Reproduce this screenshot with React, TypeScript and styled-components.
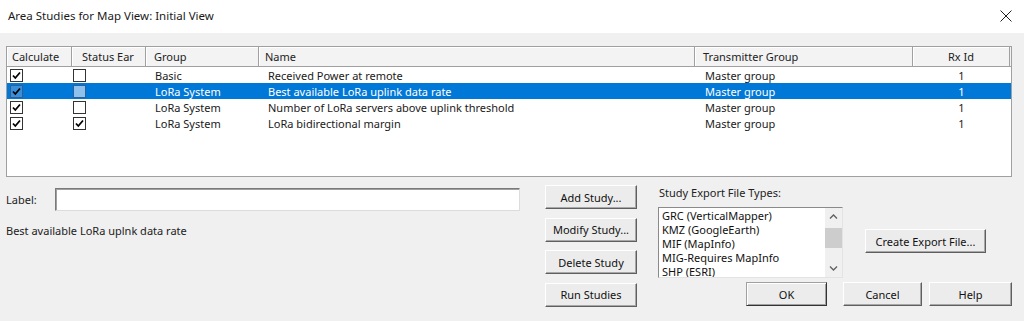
import React from 'react';
import styled, { createGlobalStyle, css } from 'styled-components';

const GlobalStyle = createGlobalStyle`
  html, body {
    margin: 0;
    padding: 0;
    background: #f0f0f0;
  }
  body {
    font-family: 'Noto Sans', 'Open Sans', sans-serif;
    font-size: 11px;
    color: #000;
  }
`;

const COLS = '65px 74px 113px 436px 218px 97px';

const Dialog = styled.div`
  width: 1024px;
  height: 321px;
  display: flex;
  flex-direction: column;
  background: #f0f0f0;
  overflow: hidden;
`;

const TitleBar = styled.div`
  height: 33px;
  flex: none;
  background: #fff;
  display: flex;
  align-items: center;
  justify-content: space-between;
  padding: 0 12px 2px 8px;
  box-sizing: border-box;
  font-size: 11.5px;
  color: #1a1a1a;
`;

const CloseIcon = styled.svg`
  width: 12px;
  height: 12px;
`;

const Body = styled.div`
  padding: 13px 12px 0 6px;
  display: flex;
  flex-direction: column;
`;

const ListView = styled.div`
  width: 1006px;
  height: 131px;
  box-sizing: border-box;
  border: 1px solid #a0a0a0;
  background: #fff;
`;

const HeaderRow = styled.div`
  display: grid;
  grid-template-columns: ${COLS};
  height: 20px;
  background: #f3f3f3;
  border-bottom: 1px solid #a0a0a0;
  box-sizing: border-box;
`;

const HeaderCell = styled.div<{ $pad: number; $center?: boolean }>`
  display: flex;
  align-items: center;
  justify-content: ${(p) => (p.$center ? 'center' : 'flex-start')};
  padding-left: ${(p) => p.$pad}px;
  border-right: 1px solid #a0a0a0;
  box-shadow: inset 1px 1px #fff;
  color: #222;
  white-space: nowrap;
`;

const Row = styled.div<{ $selected?: boolean }>`
  display: grid;
  grid-template-columns: ${COLS};
  height: 16px;
  align-items: center;
  white-space: nowrap;
  ${(p) =>
    p.$selected
      ? css`
          background: #0078d7;
          color: #fff;
        `
      : css`
          color: #1a1a1a;
        `}
`;

const Cell = styled.div<{ $pad: number; $center?: boolean }>`
  display: flex;
  align-items: center;
  justify-content: ${(p) => (p.$center ? 'center' : 'flex-start')};
  padding-left: ${(p) => p.$pad}px;
  overflow: hidden;
`;

const Box = styled.div<{ $selected?: boolean; $checked?: boolean }>`
  width: 13px;
  height: 13px;
  box-sizing: border-box;
  border: 1px solid ${(p) => (p.$selected ? '#2c5f96' : '#333')};
  background: ${(p) =>
    p.$selected ? (p.$checked ? '#3b8fd8' : '#8ec1ec') : '#fff'};
  display: flex;
  align-items: center;
  justify-content: center;
`;

const Bottom = styled.div`
  margin-top: 8px;
  display: flex;
`;

const LeftCol = styled.div`
  width: 514px;
  display: flex;
  flex-direction: column;
`;

const LabelRow = styled.div`
  margin-top: 3px;
  display: flex;
  align-items: center;
  height: 23px;
  color: #222;
`;

const LabelText = styled.span`
  width: 49px;
`;

const TextInput = styled.div`
  width: 465px;
  height: 23px;
  box-sizing: border-box;
  background: #fff;
  border: 1px solid;
  border-color: #7a7a7a #dcdcdc #dcdcdc #7a7a7a;
  box-shadow: inset 1px 1px #a0a0a0;
`;

const Description = styled.div`
  margin-top: 12px;
  color: #222;
`;

const ButtonCol = styled.div`
  margin-left: 25px;
  width: 92px;
  display: flex;
  flex-direction: column;
  gap: 8.5px;
`;

const Button = styled.div<{ $w?: number; $default?: boolean }>`
  width: ${(p) => (p.$w ? `${p.$w}px` : '100%')};
  height: 24px;
  box-sizing: border-box;
  display: flex;
  align-items: center;
  justify-content: center;
  background: #ececec;
  color: #111;
  border: 1px solid;
  border-color: #fff #5f5f5f #5f5f5f #fff;
  box-shadow: inset -1px -1px #a8a8a8;
  white-space: nowrap;
  ${(p) =>
    p.$default &&
    css`
      border-color: #a0a0a0 #333 #333 #a0a0a0;
      box-shadow: inset 1px 1px #fff, inset -1px -1px #a0a0a0;
    `}
`;

const RightArea = styled.div`
  margin-left: 21px;
  width: 354px;
  display: flex;
  flex-direction: column;
`;

const TopRow = styled.div`
  display: flex;
`;

const ExportGroup = styled.div`
  width: 185px;
  display: flex;
  flex-direction: column;
`;

const ExportLabel = styled.div`
  height: 15px;
  line-height: 15px;
  margin-bottom: 7px;
  color: #222;
  padding-left: 1px;
`;

const ListBox = styled.div`
  height: 71px;
  box-sizing: border-box;
  background: #fff;
  border: 1px solid;
  border-color: #8a8a8a #e3e3e3 #e3e3e3 #8a8a8a;
  display: flex;
  overflow: hidden;
`;

const ListItems = styled.div`
  flex: 1;
  padding: 1px 0 0 3px;
  color: #111;
`;

const ListItem = styled.div`
  height: 14px;
  line-height: 14px;
  white-space: nowrap;
`;

const ScrollBar = styled.div`
  width: 17px;
  background: #f0f0f0;
  display: flex;
  flex-direction: column;
  align-items: center;
`;

const ArrowSlot = styled.div`
  height: 17px;
  width: 100%;
  display: flex;
  align-items: center;
  justify-content: center;
`;

const Thumb = styled.div`
  margin-top: 3px;
  width: 100%;
  height: 20px;
  background: #cdcdcd;
`;

const Spacer = styled.div`
  flex: 1;
`;

const CreateButtonWrap = styled.div`
  margin-left: 22px;
  margin-top: 44px;
`;

const FooterRow = styled.div`
  margin-top: 4px;
  display: flex;
  justify-content: flex-end;
  gap: 16px;
`;

const FooterPair = styled.div`
  display: flex;
  gap: 7px;
`;

const Check = () => (
  <svg width="9" height="9" viewBox="0 0 9 9">
    <path d="M1 4.5 L3.3 7 L8 1.5" fill="none" stroke="#000" strokeWidth="1.8" />
  </svg>
);

const Chevron = ({ up }: { up?: boolean }) => (
  <svg width="9" height="5" viewBox="0 0 9 5">
    <path
      d={up ? 'M1 4.5 L4.5 1 L8 4.5' : 'M1 0.5 L4.5 4 L8 0.5'}
      fill="none"
      stroke="#606060"
      strokeWidth="1.3"
    />
  </svg>
);

const CheckBox = ({ checked, selected }: { checked: boolean; selected?: boolean }) => (
  <Box $checked={checked} $selected={selected}>
    {checked && <Check />}
  </Box>
);

type Study = {
  calc: boolean;
  status: boolean;
  group: string;
  name: string;
  tx: string;
  rx: string;
  selected?: boolean;
};

const studies: Study[] = [
  { calc: true, status: false, group: 'Basic', name: 'Received Power at remote', tx: 'Master group', rx: '1' },
  {
    calc: true,
    status: false,
    group: 'LoRa System',
    name: 'Best available LoRa uplink data rate',
    tx: 'Master group',
    rx: '1',
    selected: true,
  },
  {
    calc: true,
    status: false,
    group: 'LoRa System',
    name: 'Number of LoRa servers above uplink threshold',
    tx: 'Master group',
    rx: '1',
  },
  { calc: true, status: true, group: 'LoRa System', name: 'LoRa bidirectional margin', tx: 'Master group', rx: '1' },
];

const exportTypes = [
  'GRC (VerticalMapper)',
  'KMZ (GoogleEarth)',
  'MIF (MapInfo)',
  'MIG-Requires MapInfo',
  'SHP (ESRI)',
];

const App = () => {
  return (
    <Dialog>
      <GlobalStyle />
      <TitleBar>
        <span>Area Studies for Map View: Initial View</span>
        <CloseIcon viewBox="0 0 12 12">
          <path d="M0.5 0.5 L11.5 11.5 M11.5 0.5 L0.5 11.5" stroke="#222" strokeWidth="1" />
        </CloseIcon>
      </TitleBar>
      <Body>
        <ListView>
          <HeaderRow>
            <HeaderCell $pad={5}>Calculate</HeaderCell>
            <HeaderCell $pad={10}>Status Ear</HeaderCell>
            <HeaderCell $pad={8}>Group</HeaderCell>
            <HeaderCell $pad={6}>Name</HeaderCell>
            <HeaderCell $pad={8}>Transmitter Group</HeaderCell>
            <HeaderCell $pad={0} $center>
              Rx Id
            </HeaderCell>
          </HeaderRow>
          {studies.map((s) => (
            <Row key={s.name} $selected={s.selected}>
              <Cell $pad={3}>
                <CheckBox checked={s.calc} selected={s.selected} />
              </Cell>
              <Cell $pad={1}>
                <CheckBox checked={s.status} selected={s.selected} />
              </Cell>
              <Cell $pad={9}>{s.group}</Cell>
              <Cell $pad={9}>{s.name}</Cell>
              <Cell $pad={10}>{s.tx}</Cell>
              <Cell $pad={0} $center>
                {s.rx}
              </Cell>
            </Row>
          ))}
        </ListView>

        <Bottom>
          <LeftCol>
            <LabelRow>
              <LabelText>Label:</LabelText>
              <TextInput />
            </LabelRow>
            <Description>Best available LoRa uplnk data rate</Description>
          </LeftCol>

          <ButtonCol>
            <Button>Add Study...</Button>
            <Button>Modify Study...</Button>
            <Button>Delete Study</Button>
            <Button>Run Studies</Button>
          </ButtonCol>

          <RightArea>
            <TopRow>
              <ExportGroup>
                <ExportLabel>Study Export File Types:</ExportLabel>
                <ListBox>
                  <ListItems>
                    {exportTypes.map((t) => (
                      <ListItem key={t}>{t}</ListItem>
                    ))}
                  </ListItems>
                  <ScrollBar>
                    <ArrowSlot>
                      <Chevron up />
                    </ArrowSlot>
                    <Thumb />
                    <Spacer />
                    <ArrowSlot>
                      <Chevron />
                    </ArrowSlot>
                  </ScrollBar>
                </ListBox>
              </ExportGroup>
              <CreateButtonWrap>
                <Button $w={121}>Create Export File...</Button>
              </CreateButtonWrap>
            </TopRow>
            <FooterRow>
              <Button $w={81} $default>
                OK
              </Button>
              <FooterPair>
                <Button $w={79}>Cancel</Button>
                <Button $w={83}>Help</Button>
              </FooterPair>
            </FooterRow>
          </RightArea>
        </Bottom>
      </Body>
    </Dialog>
  );
};

export default App;
